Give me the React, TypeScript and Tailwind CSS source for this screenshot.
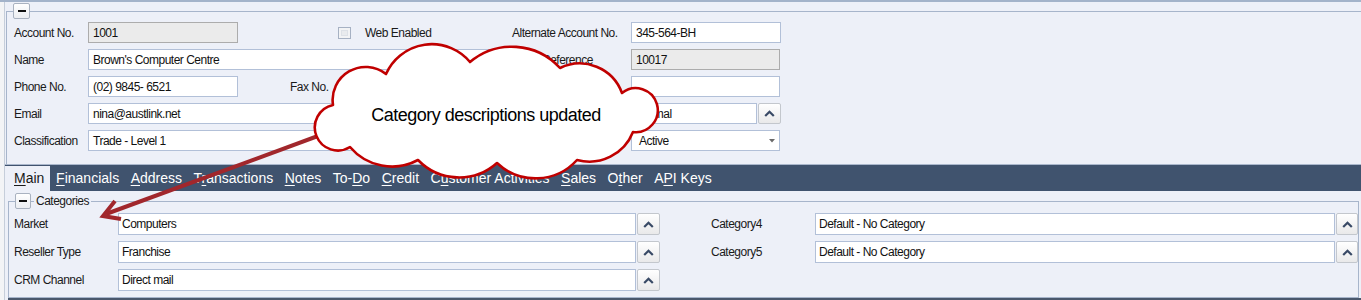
import React from "react";

const Chevron = () => (
  <svg width="11" height="7" viewBox="0 0 11 7">
    <path d="M1.2 6 L5.5 1.7 L9.8 6" fill="none" stroke="#394a66" strokeWidth="2.2" />
  </svg>
);

function LookupBtn({ w = "w-[23px]", h = "h-[21px]" }: { w?: string; h?: string }) {
  return (
    <div
      className={`${h} ${w} ml-[1px] shrink-0 flex items-center justify-center rounded-[2px] border border-[#c3c7cd] bg-linear-to-b from-[#ffffff] to-[#e9e9ea]`}
    >
      <Chevron />
    </div>
  );
}

function Input({
  w,
  value = "",
  grey = false,
  h = "h-[21px]",
  pl = "pl-[4px]",
}: {
  w: string;
  value?: string;
  grey?: boolean;
  h?: string;
  pl?: string;
}) {
  return (
    <div
      className={`${h} ${w} ${pl} shrink-0 border flex items-center overflow-hidden whitespace-nowrap text-[#111] ${
        grey ? "bg-[#ebebeb] border-[#acacac]" : "bg-white border-[#b2c0d8]"
      }`}
    >
      {value}
    </div>
  );
}

function Label({ w, children }: { w: string; children?: React.ReactNode }) {
  return <div className={`${w} shrink-0 whitespace-nowrap`}>{children}</div>;
}

function CollapseBtn({ className }: { className: string }) {
  return (
    <div
      className={`absolute flex items-center justify-center rounded-[2px] border border-[#a9b2c0] bg-linear-to-b from-[#ffffff] to-[#eceef2] ${className}`}
    >
      <div className="w-[8px] h-[1.5px] bg-[#111]" />
    </div>
  );
}

const tabs: [string, number][] = [
  ["Financials", 0],
  ["Address", 0],
  ["Transactions", 1],
  ["Notes", 0],
  ["To-Do", 3],
  ["Credit", 0],
  ["Customer Activities", 1],
  ["Sales", 0],
  ["Other", 1],
  ["API Keys", 1],
];

function Mnemonic({ text, idx }: { text: string; idx: number }) {
  return (
    <span>
      {text.slice(0, idx)}
      <span className="underline decoration-1 underline-offset-[2px]">{text[idx]}</span>
      {text.slice(idx + 1)}
    </span>
  );
}

export default function App() {
  return (
    <div className="relative w-[1361px] h-[300px] overflow-hidden bg-[#edf0f8] text-[12px] tracking-[-0.5px] text-[#1a1a1a] font-['Liberation_Sans',Arial,sans-serif]">
      <div className="h-[2px] bg-[#a3b3ca]" />
      <div className="flex h-[298px]">
        <div className="w-[5px] shrink-0 bg-[#f3f4f6] border-r border-[#c6ceda]" />
        <div className="flex-1 flex flex-col">
          {/* Top group */}
          <div className="relative ml-[1px] mt-[9px] border-l border-t border-[#a7b5cb] pt-[10px] pb-[13px] pl-[7px] flex flex-col gap-[6px]">
            <CollapseBtn className="left-[6px] top-[-9px] w-[17px] h-[16px]" />
            <div className="flex items-center h-[21px]">
              <Label w="w-[74px]">Account No.</Label>
              <Input w="w-[150px]" value="1001" grey />
              <div className="w-[100px] shrink-0" />
              <div className="w-[13px] h-[12px] shrink-0 border border-[#a6b1c3] bg-[#f2f3f5] p-[2px]">
                <div className="w-full h-full border border-[#dde1e7] bg-[#e9ebee]" />
              </div>
              <div className="w-[14px] shrink-0" />
              <Label w="w-[147px]">Web Enabled</Label>
              <Label w="w-[119px]">Alternate Account No.</Label>
              <Input w="w-[150px]" value="345-564-BH" />
            </div>
            <div className="flex items-center h-[21px]">
              <Label w="w-[74px]">Name</Label>
              <Input w="w-[444px]" value="Brown's Computer Centre" />
              <div className="w-[10px] shrink-0" />
              <Label w="w-[89px]">Reference</Label>
              <Input w="w-[149px]" value="10017" grey />
            </div>
            <div className="flex items-center h-[21px]">
              <Label w="w-[74px]">Phone No.</Label>
              <Input w="w-[150px]" value="(02) 9845- 6521" />
              <div className="w-[52px] shrink-0" />
              <Label w="w-[75px]">Fax No.</Label>
              <Input w="w-[115px]" value="" />
              <div className="w-[32px] shrink-0" />
              <Label w="w-[119px]" />
              <Input w="w-[149px]" value="" />
            </div>
            <div className="flex items-center h-[21px]">
              <Label w="w-[74px]">Email</Label>
              <Input w="w-[392px]" value="nina@austlink.net" />
              <div className="w-[32px] shrink-0" />
              <Label w="w-[119px]" />
              <Input w="w-[126px]" value="Normal" />
              <LookupBtn />
            </div>
            <div className="flex items-center h-[21px]">
              <Label w="w-[74px]">Classification</Label>
              <Input w="w-[392px]" value="Trade - Level 1" />
              <div className="w-[32px] shrink-0" />
              <Label w="w-[119px]" />
              <div className="relative h-[21px] w-[149px] shrink-0 border border-[#b2c0d8] bg-white flex items-center pl-[7px] text-[#111]">
                Active
                <svg className="absolute right-[4px] top-[8px]" width="6" height="4" viewBox="0 0 6 4">
                  <path d="M0 0 H6 L3 3.5 Z" fill="#6a6a6a" />
                </svg>
              </div>
            </div>
          </div>
          <div className="h-[1px] bg-[#aab7cc]" />
          {/* Tabs */}
          <div className="flex h-[26px] bg-[#40536e] text-[14px] tracking-normal text-white">
            <div className="flex items-center pl-[9px] pr-[6px] mt-[1px] bg-[#edf0f8] text-[#1a1a1a]">
              <Mnemonic text="Main" idx={0} />
            </div>
            {tabs.map(([t, i]) => (
              <div key={t} className="flex items-center px-[5.75px] pt-[1px]">
                <Mnemonic text={t} idx={i} />
              </div>
            ))}
          </div>
          {/* Categories group */}
          <div className="relative ml-[3px] mr-[2px] mt-[10px] h-[97px] border border-[#a7b5cb] pt-[11px] pl-[5px] flex">
            <CollapseBtn className="left-[6px] top-[-9px] w-[16px] h-[16px]" />
            <div className="absolute left-[25px] top-[-8px] px-[2px] bg-[#edf0f8] leading-[14px]">Categories</div>
            <div className="flex flex-col gap-[6px]">
              {[
                ["Market", "Computers"],
                ["Reseller Type", "Franchise"],
                ["CRM Channel", "Direct mail"],
              ].map(([l, v]) => (
                <div key={l} className="flex items-center h-[22px]">
                  <Label w="w-[104px]">{l}</Label>
                  <Input w="w-[518px]" h="h-[22px]" pl="pl-[3px]" value={v} />
                  <LookupBtn h="h-[22px]" />
                </div>
              ))}
            </div>
            <div className="flex-1 ml-[51px] flex flex-col gap-[6px]">
              {["Category4", "Category5"].map((l) => (
                <div key={l} className="flex items-center h-[22px]">
                  <Label w="w-[104px]">{l}</Label>
                  <div className="flex-1 h-[22px] border border-[#b2c0d8] bg-white flex items-center pl-[3px] text-[#111] whitespace-nowrap">
                    Default - No Category
                  </div>
                  <LookupBtn w="w-[22px]" h="h-[22px]" />
                </div>
              ))}
            </div>
          </div>
          <div className="ml-[3px] h-[2px] bg-[#4a586d]" />
        </div>
      </div>

      {/* Callout overlay */}
      <svg className="absolute left-0 top-0 pointer-events-none" width="1361" height="300" viewBox="0 0 1361 300">
        <line x1="345" y1="126" x2="106" y2="214" stroke="#a1272c" strokeWidth="4" />
        <polyline points="115,201 103,216 121,219" fill="none" stroke="#a1272c" strokeWidth="4" strokeLinejoin="miter" />
        <path
          d="M386 74 A50 50 0 0 1 470 62 A65 65 0 0 1 560 68 A45 45 0 0 1 622 93 A22 22 0 1 1 633 132 A47 47 0 0 1 577 160 A56 56 0 0 1 497 163 A57 57 0 0 1 418 160 A55 55 0 0 1 350 147 A23 23 0 1 1 333 105 A33 33 0 0 1 386 74 Z"
          fill="#ffffff"
          stroke="#c00000"
          strokeWidth="2.6"
          strokeLinejoin="round"
        />
        <text
          x="486"
          y="121"
          textAnchor="middle"
          fontSize="18"
          fontFamily="'Liberation Sans', Arial, sans-serif"
          fill="#000"
        >
          Category descriptions updated
        </text>
      </svg>
    </div>
  );
}
